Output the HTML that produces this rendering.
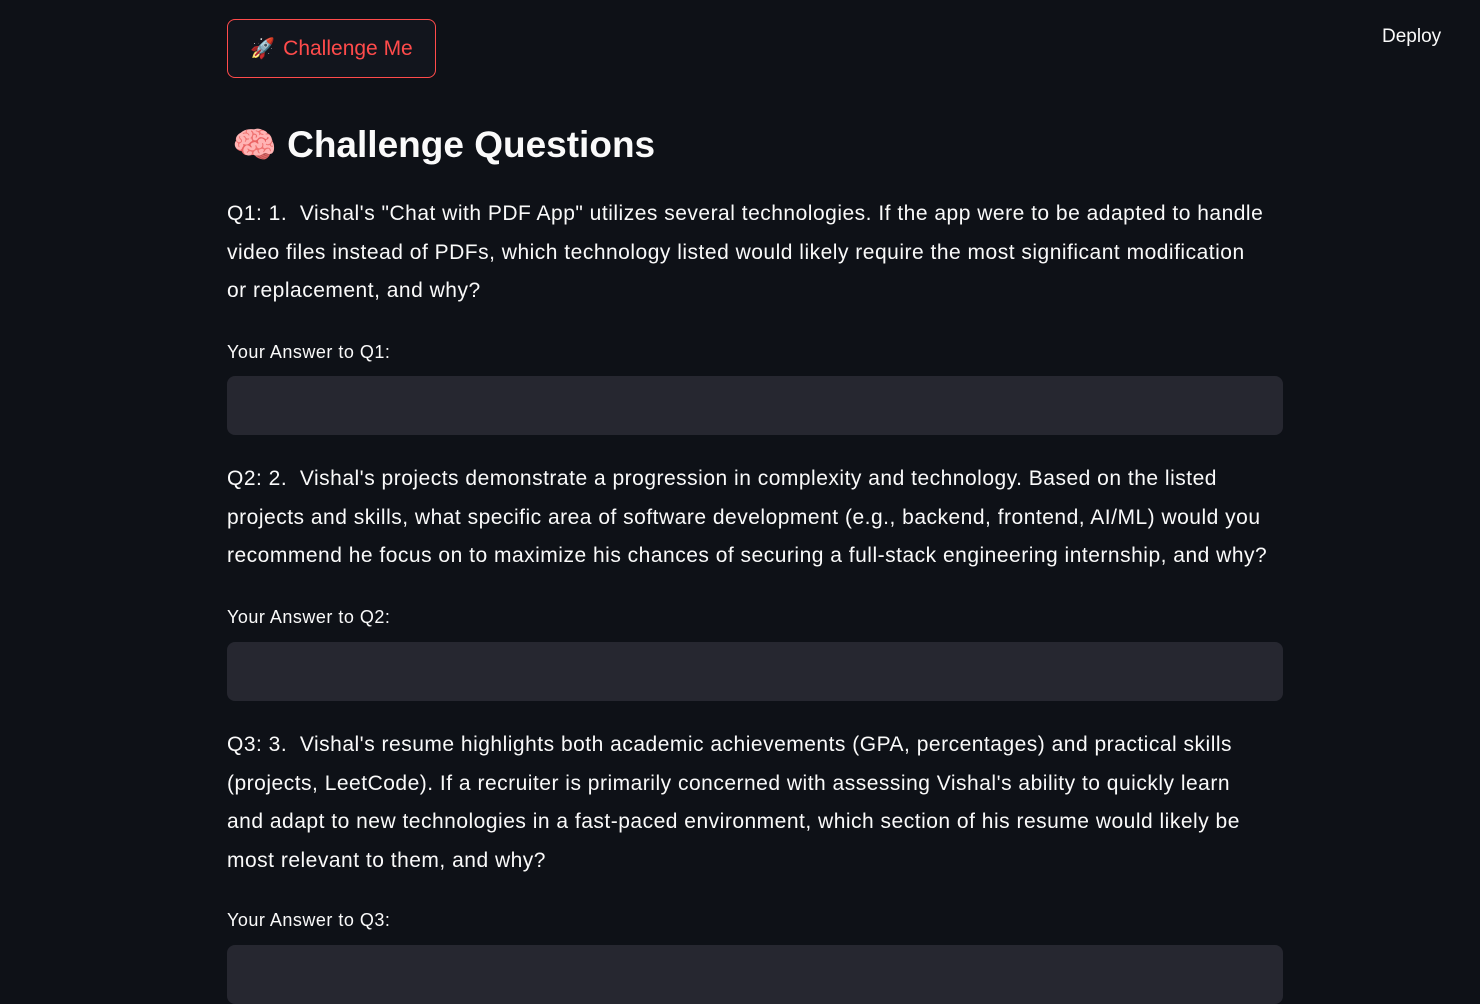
<!DOCTYPE html>
<html><head><meta charset="utf-8"><style>
html,body{margin:0;padding:0;background:#0e1117;width:1480px;height:976px;overflow:hidden;font-family:"Liberation Sans",sans-serif;color:#fafafa}
.a{position:absolute;white-space:nowrap}
.btn{left:227px;top:19px;width:207px;height:57px;border:1px solid #ff4b4b;border-radius:8px;background:#12151d;color:#ff4b4b;font-size:21px;display:flex;align-items:center;justify-content:center;gap:8px}
h1{position:absolute;left:232px;top:124px;margin:0;font-size:37px;font-weight:bold;white-space:nowrap}
.p{font-size:21px;line-height:38.5px;letter-spacing:0.5px;left:227px}
.l{font-size:18px;left:227px;letter-spacing:0.5px}
.in{position:absolute;left:227px;width:1056px;height:59px;background:#262730;border-radius:8px}
</style></head><body>
<div class="a btn"><span style="font-size:20px">🚀</span><span>Challenge Me</span></div>
<div class="a" style="left:1382px;top:26px;font-size:19px;color:#fafafa">Deploy</div>
<div class="a" style="left:1474px;top:24px;font-size:19px;color:#aaa">⋮</div>
<h1><span style="font-size:36px">🧠</span>&nbsp;Challenge Questions</h1>
<div class="a p" style="top:195px">Q1: 1.&nbsp; Vishal's "Chat with PDF App" utilizes several technologies. If the app were to be adapted to handle<br>video files instead of PDFs, which technology listed would likely require the most significant modification<br>or replacement, and why?</div>
<div class="a l" style="top:342px">Your Answer to Q1:</div>
<div class="in" style="top:376px"></div>
<div class="a p" style="top:460px">Q2: 2.&nbsp; Vishal's projects demonstrate a progression in complexity and technology. Based on the listed<br>projects and skills, what specific area of software development (e.g., backend, frontend, AI/ML) would you<br>recommend he focus on to maximize his chances of securing a full-stack engineering internship, and why?</div>
<div class="a l" style="top:607px">Your Answer to Q2:</div>
<div class="in" style="top:642px"></div>
<div class="a p" style="top:726px">Q3: 3.&nbsp; Vishal's resume highlights both academic achievements (GPA, percentages) and practical skills<br>(projects, LeetCode). If a recruiter is primarily concerned with assessing Vishal's ability to quickly learn<br>and adapt to new technologies in a fast-paced environment, which section of his resume would likely be<br>most relevant to them, and why?</div>
<div class="a l" style="top:910px">Your Answer to Q3:</div>
<div class="in" style="top:945px"></div>
</body></html>
